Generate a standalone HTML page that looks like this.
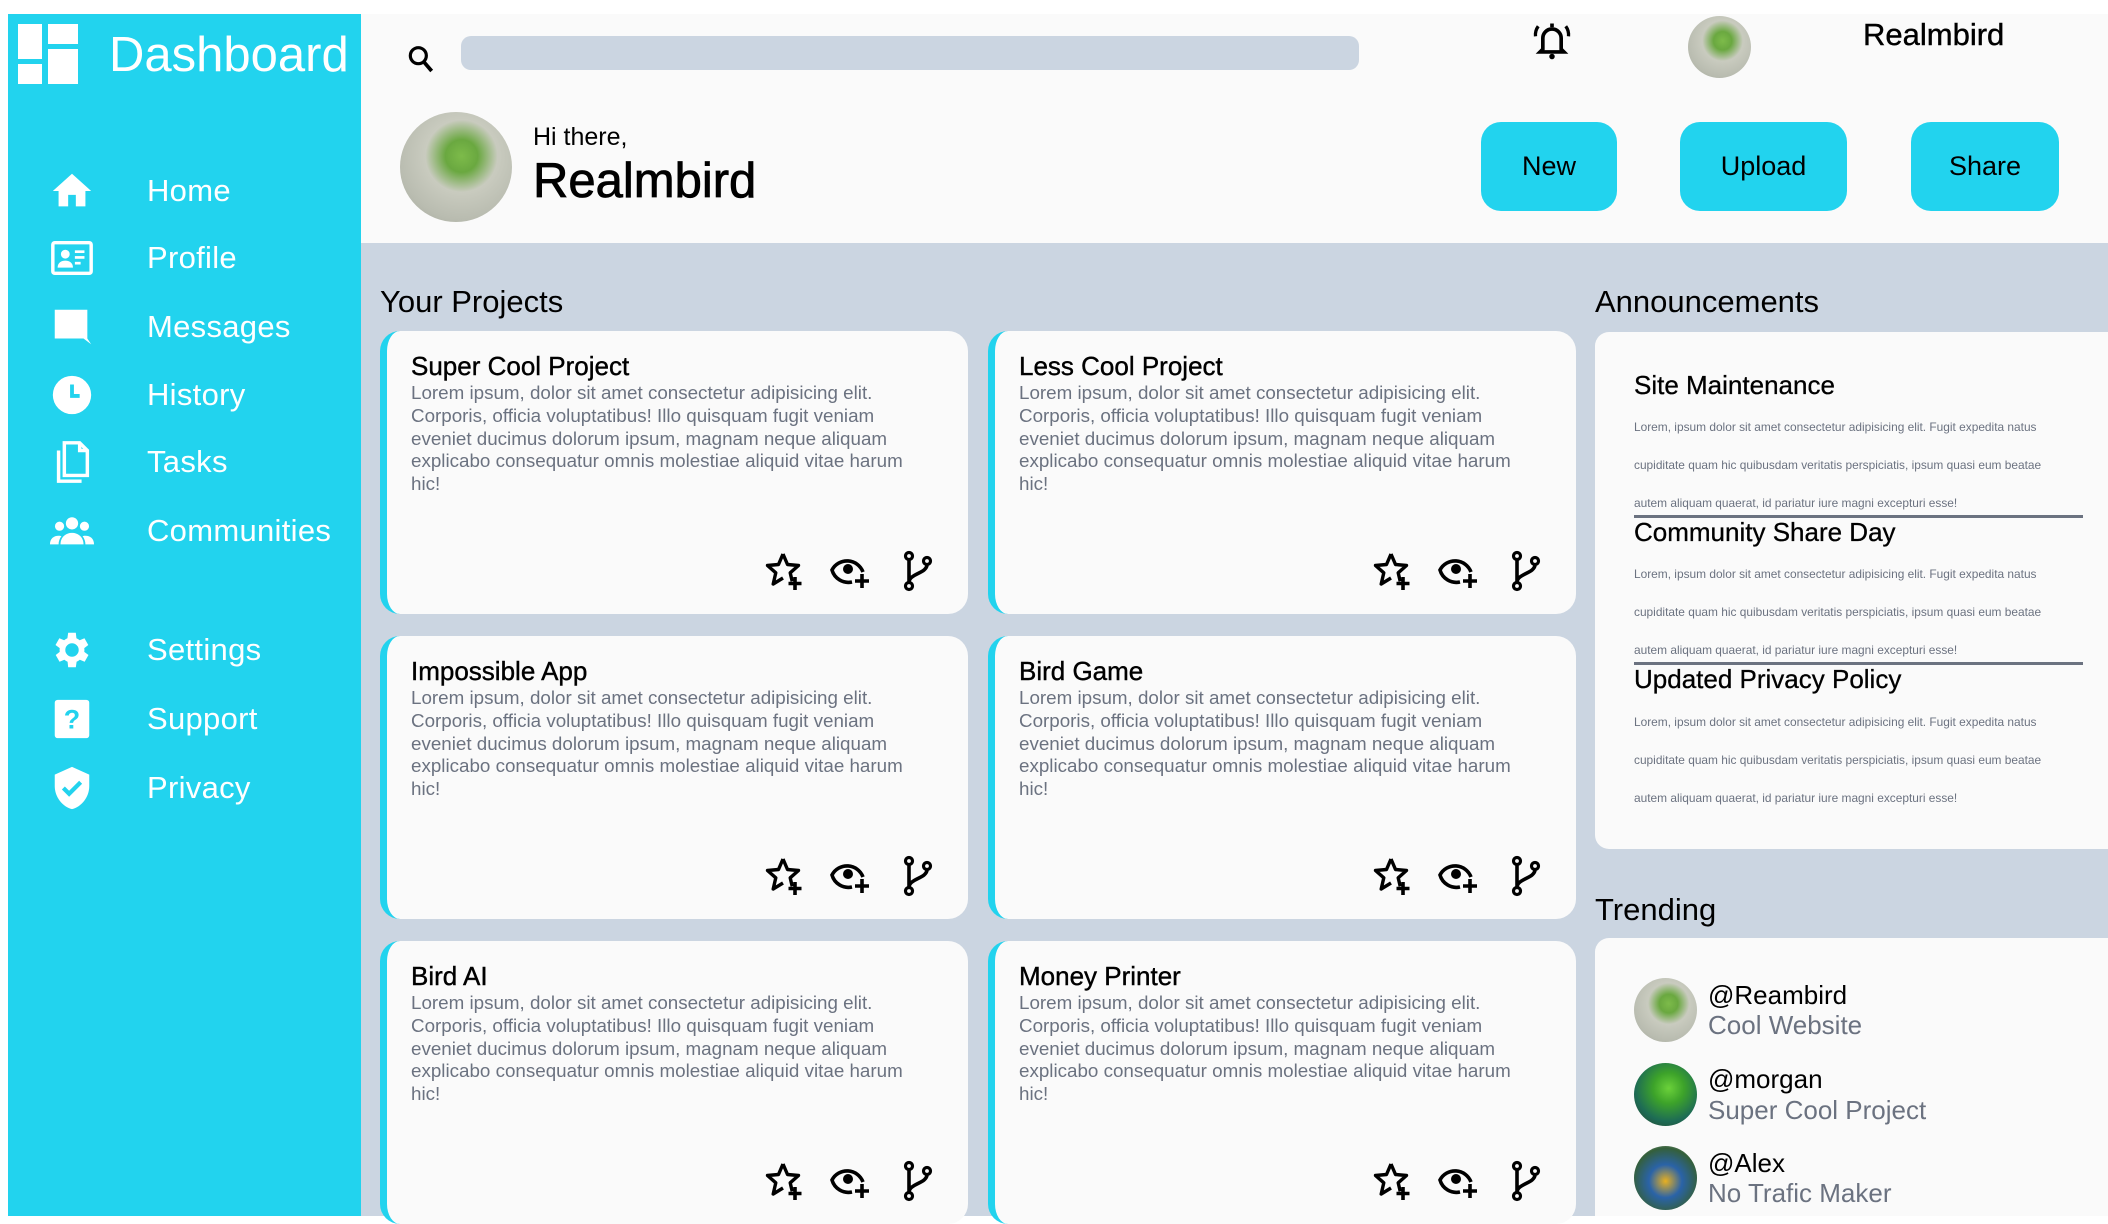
<!DOCTYPE html>
<html><head><meta charset="utf-8">
<style>
*{margin:0;padding:0;box-sizing:border-box}
body{width:2108px;height:1216px;background:#fff;font-family:"Liberation Sans",Arial,sans-serif;position:relative;overflow:hidden}
.a{position:absolute;white-space:nowrap}
#side{position:absolute;left:8px;top:14px;width:353px;height:1202px;background:#22d3ee}
#head{position:absolute;left:361px;top:14px;width:1747px;height:229px;background:#fafafa}
#main{position:absolute;left:361px;top:243px;width:1747px;height:973px;background:#cbd5e1}
.nav{position:absolute;left:147px;color:#fff;font-size:31px;line-height:40px;letter-spacing:0.3px}
.ni{position:absolute;left:49px;width:46px;height:46px}
.btn{position:absolute;top:122px;height:89px;background:#22d3ee;border-radius:20px;font-size:27px;color:#000;display:flex;align-items:center;justify-content:center}
.card{position:absolute;width:588px;height:283px;background:#fafafa;border-radius:20px;border-left:7px solid #22d3ee}
.card h3{position:absolute;left:24px;top:20px;font-size:26px;color:#000;line-height:30px;font-weight:normal;-webkit-text-stroke:0.4px #000}
.card p{position:absolute;left:24px;top:51px;font-size:18.8px;line-height:22.8px;color:#6b7280;white-space:nowrap}
.ic{position:absolute;top:219px;width:44px;height:44px}
.ann h4{position:absolute;left:39px;font-size:26px;font-weight:normal;color:#000;-webkit-text-stroke:0.3px #000}
.ann p{position:absolute;left:39px;font-size:11.9px;line-height:38px;color:#6b7280;white-space:nowrap}
.hr{position:absolute;left:39px;width:449px;height:3px;background:#6b7280}
.av{position:absolute;border-radius:50%}
.bird{background:radial-gradient(circle at 55% 40%,#7dbb4a 0,#6aa840 18%,#c9cbbf 40%,#b9bcb0 70%,#9fa296 100%)}
.tr{position:absolute;left:113px;font-size:26px;line-height:30px}
</style></head><body>
<div id="side"></div>
<div id="head"></div>
<div id="main"></div>

<svg class="a" style="left:18px;top:24px" width="62" height="60" viewBox="0 0 62 60"><rect x="0" y="0" width="24" height="35" fill="#fff"/><rect x="0" y="40" width="24" height="20" fill="#fff"/><rect x="30" y="0" width="30" height="20" fill="#fff"/><rect x="30" y="25" width="30" height="35" fill="#fff"/></svg>
<div class="a" style="left:109px;top:26px;font-size:49px;color:#fff;line-height:58px">Dashboard</div>

<svg class="ni" style="top:168px" viewBox="0 0 24 24"><path d="M12 3L2 12h3v8h5v-6h4v6h5v-8h3z" fill="#fff"/></svg>
<svg class="ni" style="top:235px" viewBox="0 0 24 24"><rect x="2" y="4" width="20" height="16" rx="1" fill="none" stroke="#fff" stroke-width="1.8"/><circle cx="8.5" cy="10" r="2.3" fill="#fff"/><path d="M4.5 17c0-2.5 2-3.6 4-3.6s4 1.1 4 3.6z" fill="#fff"/><rect x="13.5" y="8" width="5" height="1.4" fill="#fff"/><rect x="13.5" y="11" width="5" height="1.4" fill="#fff"/><rect x="13.5" y="14" width="3" height="1.4" fill="#fff"/></svg>
<svg class="ni" style="top:304px" viewBox="0 0 24 24"><path d="M3 3h17v15l2 3-4-3H3z" fill="#fff"/></svg>
<svg class="ni" style="top:372px" viewBox="0 0 24 24"><circle cx="12" cy="12" r="10" fill="#fff"/><path d="M12 6.5v6h4" stroke="#22d3ee" stroke-width="2" fill="none"/></svg>
<svg class="ni" style="top:439px" viewBox="0 0 24 24"><path d="M8 2h8l4 4v13H8z" fill="none" stroke="#fff" stroke-width="1.8"/><path d="M16 2v4h4" fill="none" stroke="#fff" stroke-width="1.8"/><path d="M5 6v16h12" fill="none" stroke="#fff" stroke-width="1.8"/></svg>
<svg class="ni" style="top:508px" viewBox="0 0 24 24"><circle cx="12" cy="8" r="3.2" fill="#fff"/><circle cx="5.5" cy="9.5" r="2.4" fill="#fff"/><circle cx="18.5" cy="9.5" r="2.4" fill="#fff"/><path d="M6 19c0-4 3-6 6-6s6 2 6 6z" fill="#fff"/><path d="M0.5 19c0-3 2-4.5 4.5-4.5 1 0 1.5.2 1.5.2C5.5 16 5 17.5 5 19z" fill="#fff"/><path d="M23.5 19c0-3-2-4.5-4.5-4.5-1 0-1.5.2-1.5.2 1 1.300 1.5 2.8 1.5 4.3z" fill="#fff"/></svg>
<svg class="ni" style="top:627px" viewBox="0 0 24 24"><path fill="#fff" d="M19.4 13a7.5 7.5 0 000-2l2.1-1.6-2-3.5-2.5 1a7 7 0 00-1.7-1L15 3h-4l-.4 2.9a7 7 0 00-1.7 1l-2.5-1-2 3.5L6.6 11a7.5 7.5 0 000 2l-2.1 1.6 2 3.5 2.5-1a7 7 0 001.7 1L11 21h4l.4-2.9a7 7 0 001.7-1l2.5 1 2-3.5zM13 15.5a3.5 3.5 0 110-7 3.5 3.5 0 010 7z" transform="translate(-1 0)"/></svg>
<svg class="ni" style="top:696px" viewBox="0 0 24 24"><rect x="3" y="2" width="18" height="20" rx="1.5" fill="#fff"/><text x="12" y="17" font-size="14" font-family="Liberation Sans" font-weight="bold" text-anchor="middle" fill="#22d3ee">?</text></svg>
<svg class="ni" style="top:765px" viewBox="0 0 24 24"><path d="M12 1L3 5v6c0 5.5 3.8 10.7 9 12 5.2-1.3 9-6.5 9-12V5z" fill="#fff"/><path d="M7.5 12l3 3 6-6" stroke="#22d3ee" stroke-width="2.2" fill="none"/></svg>

<div class="nav" style="top:171px">Home</div>
<div class="nav" style="top:238px">Profile</div>
<div class="nav" style="top:307px">Messages</div>
<div class="nav" style="top:375px">History</div>
<div class="nav" style="top:442px">Tasks</div>
<div class="nav" style="top:511px">Communities</div>
<div class="nav" style="top:630px">Settings</div>
<div class="nav" style="top:699px">Support</div>
<div class="nav" style="top:768px">Privacy</div>

<svg class="a" style="left:405px;top:42px" width="32" height="34" viewBox="0 0 24 24"><circle cx="10" cy="9.5" r="6" fill="none" stroke="#000" stroke-width="2.4"/><path d="M14 14l6 7" stroke="#000" stroke-width="2.8"/></svg>
<div class="a" style="left:461px;top:36px;width:898px;height:34px;background:#cbd5e1;border-radius:10px"></div>
<svg class="a" style="left:1529px;top:18px" width="46" height="44" viewBox="0 0 24 24"><path d="M7 17V11a5 5 0 0110 0v6l1.5 1.5h-13z" fill="none" stroke="#000" stroke-width="2"/><circle cx="12" cy="21" r="1.5"/><path d="M4.5 4.5A8 8 0 003 10M19.5 4.5A8 8 0 0121 10" stroke="#000" stroke-width="1.8" fill="none"/><rect x="11" y="3" width="2" height="2"/></svg>
<div class="av bird" style="left:1688px;top:16px;width:63px;height:62px"></div>
<div class="a" style="left:1863px;top:16px;font-size:31px;line-height:38px;-webkit-text-stroke:0.4px #000">Realmbird</div>
<div class="av bird" style="left:400px;top:112px;width:112px;height:110px"></div>
<div class="a" style="left:533px;top:122px;font-size:25px;line-height:30px">Hi there,</div>
<div class="a" style="left:533px;top:151px;font-size:49px;line-height:60px;-webkit-text-stroke:0.8px #000">Realmbird</div>
<div class="btn" style="left:1481px;width:136px">New</div>
<div class="btn" style="left:1680px;width:167px">Upload</div>
<div class="btn" style="left:1911px;width:148px">Share</div>

<div class="a" style="left:380px;top:283px;font-size:31px;line-height:38px">Your Projects</div>

<svg width="0" height="0" style="position:absolute"><defs>
<g id="star"><path d="M20 4l4.5 10.5 11 1-8.3 7.3 2 8.5" fill="none" stroke="#000" stroke-width="3.4" stroke-linejoin="round"/><path d="M20 4l-4.5 10.5-11 1 8.3 7.3-2.6 11.2L20 28" fill="none" stroke="#000" stroke-width="3.4" stroke-linejoin="round"/><path d="M32 27v13M25.5 33.5h13" stroke="#000" stroke-width="3.6"/></g>
<g id="eye"><path d="M33 22A17 17 0 002 20a17 17 0 0020 12" fill="none" stroke="#000" stroke-width="3.6"/><circle cx="18" cy="19" r="5"/><path d="M32 24v14M25 31h14" stroke="#000" stroke-width="3.6"/></g>
<g id="fork"><circle cx="12" cy="6" r="3.5" fill="none" stroke="#000" stroke-width="3.2"/><circle cx="12" cy="36" r="3.5" fill="none" stroke="#000" stroke-width="3.2"/><circle cx="30" cy="11" r="3.5" fill="none" stroke="#000" stroke-width="3.2"/><path d="M12 9.5v23M30 14.5c0 9-18 9-18 18" fill="none" stroke="#000" stroke-width="3.6"/></g>
</defs></svg>

<div class="card" style="left:380px;top:331px"><h3>Super Cool Project</h3><p>Lorem ipsum, dolor sit amet consectetur adipisicing elit.<br>Corporis, officia voluptatibus! Illo quisquam fugit veniam<br>eveniet ducimus dolorum ipsum, magnam neque aliquam<br>explicabo consequatur omnis molestiae aliquid vitae harum<br>hic!</p><svg class="ic" style="left:376px" viewBox="0 0 44 44"><use href="#star"/></svg><svg class="ic" style="left:443px" viewBox="0 0 44 44"><use href="#eye"/></svg><svg class="ic" style="left:510px" viewBox="0 0 44 44"><use href="#fork"/></svg></div>
<div class="card" style="left:988px;top:331px"><h3>Less Cool Project</h3><p>Lorem ipsum, dolor sit amet consectetur adipisicing elit.<br>Corporis, officia voluptatibus! Illo quisquam fugit veniam<br>eveniet ducimus dolorum ipsum, magnam neque aliquam<br>explicabo consequatur omnis molestiae aliquid vitae harum<br>hic!</p><svg class="ic" style="left:376px" viewBox="0 0 44 44"><use href="#star"/></svg><svg class="ic" style="left:443px" viewBox="0 0 44 44"><use href="#eye"/></svg><svg class="ic" style="left:510px" viewBox="0 0 44 44"><use href="#fork"/></svg></div>
<div class="card" style="left:380px;top:636px"><h3>Impossible App</h3><p>Lorem ipsum, dolor sit amet consectetur adipisicing elit.<br>Corporis, officia voluptatibus! Illo quisquam fugit veniam<br>eveniet ducimus dolorum ipsum, magnam neque aliquam<br>explicabo consequatur omnis molestiae aliquid vitae harum<br>hic!</p><svg class="ic" style="left:376px" viewBox="0 0 44 44"><use href="#star"/></svg><svg class="ic" style="left:443px" viewBox="0 0 44 44"><use href="#eye"/></svg><svg class="ic" style="left:510px" viewBox="0 0 44 44"><use href="#fork"/></svg></div>
<div class="card" style="left:988px;top:636px"><h3>Bird Game</h3><p>Lorem ipsum, dolor sit amet consectetur adipisicing elit.<br>Corporis, officia voluptatibus! Illo quisquam fugit veniam<br>eveniet ducimus dolorum ipsum, magnam neque aliquam<br>explicabo consequatur omnis molestiae aliquid vitae harum<br>hic!</p><svg class="ic" style="left:376px" viewBox="0 0 44 44"><use href="#star"/></svg><svg class="ic" style="left:443px" viewBox="0 0 44 44"><use href="#eye"/></svg><svg class="ic" style="left:510px" viewBox="0 0 44 44"><use href="#fork"/></svg></div>
<div class="card" style="left:380px;top:941px"><h3>Bird AI</h3><p>Lorem ipsum, dolor sit amet consectetur adipisicing elit.<br>Corporis, officia voluptatibus! Illo quisquam fugit veniam<br>eveniet ducimus dolorum ipsum, magnam neque aliquam<br>explicabo consequatur omnis molestiae aliquid vitae harum<br>hic!</p><svg class="ic" style="left:376px" viewBox="0 0 44 44"><use href="#star"/></svg><svg class="ic" style="left:443px" viewBox="0 0 44 44"><use href="#eye"/></svg><svg class="ic" style="left:510px" viewBox="0 0 44 44"><use href="#fork"/></svg></div>
<div class="card" style="left:988px;top:941px"><h3>Money Printer</h3><p>Lorem ipsum, dolor sit amet consectetur adipisicing elit.<br>Corporis, officia voluptatibus! Illo quisquam fugit veniam<br>eveniet ducimus dolorum ipsum, magnam neque aliquam<br>explicabo consequatur omnis molestiae aliquid vitae harum<br>hic!</p><svg class="ic" style="left:376px" viewBox="0 0 44 44"><use href="#star"/></svg><svg class="ic" style="left:443px" viewBox="0 0 44 44"><use href="#eye"/></svg><svg class="ic" style="left:510px" viewBox="0 0 44 44"><use href="#fork"/></svg></div>

<div class="a" style="left:1595px;top:283px;font-size:31px;line-height:38px">Announcements</div>
<div class="a ann" style="left:1595px;top:332px;width:513px;height:517px;background:#fafafa;border-radius:14px 0 0 14px">
<h4 style="top:38px">Site Maintenance</h4>
<p style="top:76px">Lorem, ipsum dolor sit amet consectetur adipisicing elit. Fugit expedita natus<br>cupiditate quam hic quibusdam veritatis perspiciatis, ipsum quasi eum beatae<br>autem aliquam quaerat, id pariatur iure magni excepturi esse!</p>
<div class="hr" style="top:183px"></div>
<h4 style="top:185px">Community Share Day</h4>
<p style="top:223px">Lorem, ipsum dolor sit amet consectetur adipisicing elit. Fugit expedita natus<br>cupiditate quam hic quibusdam veritatis perspiciatis, ipsum quasi eum beatae<br>autem aliquam quaerat, id pariatur iure magni excepturi esse!</p>
<div class="hr" style="top:330px"></div>
<h4 style="top:332px">Updated Privacy Policy</h4>
<p style="top:371px">Lorem, ipsum dolor sit amet consectetur adipisicing elit. Fugit expedita natus<br>cupiditate quam hic quibusdam veritatis perspiciatis, ipsum quasi eum beatae<br>autem aliquam quaerat, id pariatur iure magni excepturi esse!</p>
</div>

<div class="a" style="left:1595px;top:891px;font-size:31px;line-height:38px">Trending</div>
<div class="a" style="left:1595px;top:938px;width:513px;height:278px;background:#fafafa;border-radius:14px 0 0 0">
<div class="av bird" style="left:39px;top:40px;width:63px;height:64px"></div>
<div class="tr" style="top:42px">@Reambird</div><div class="tr" style="top:72px;color:#6b7280">Cool Website</div>
<div class="av" style="left:39px;top:125px;width:63px;height:63px;background:radial-gradient(circle at 55% 40%,#6bd13a 0,#3da32a 30%,#1d6b55 65%,#2a3a20 100%)"></div>
<div class="tr" style="top:126px">@morgan</div><div class="tr" style="top:157px;color:#6b7280">Super Cool Project</div>
<div class="av" style="left:39px;top:208px;width:63px;height:64px;background:radial-gradient(circle at 50% 55%,#e8b020 0,#2a63a8 35%,#345f3a 70%,#cfd8c0 100%)"></div>
<div class="tr" style="top:210px">@Alex</div><div class="tr" style="top:240px;color:#6b7280">No Trafic Maker</div>
</div>
</body></html>
